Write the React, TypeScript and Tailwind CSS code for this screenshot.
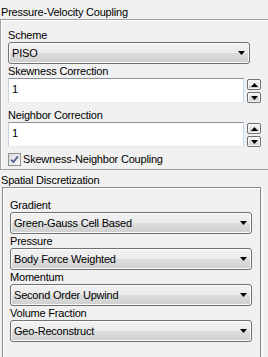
import React from 'react';

const BTN_BG =
  'bg-[linear-gradient(#f2f2f2_0%,#ebebeb_50%,#dddddd_50%,#cfcfcf_100%)]';

function Triangle({ up = false }: { up?: boolean }) {
  return (
    <svg width="7" height="4" viewBox="0 0 7 4" className="block">
      {up ? <path d="M3.5 0L7 4H0Z" fill="#000" /> : <path d="M0 0H7L3.5 4Z" fill="#000" />}
    </svg>
  );
}

function Label({ text }: { text: string }) {
  return <div className="h-[14px] leading-[14px] whitespace-nowrap">{text}</div>;
}

function Dropdown({ value }: { value: string }) {
  return (
    <div
      className={`flex h-[22px] w-[242px] items-center justify-between rounded-[3px] border border-[#707070] pl-[3px] pr-[4px] shadow-[inset_0_0_0_1px_#fafafa] ${BTN_BG}`}
    >
      <span className="leading-[14px] whitespace-nowrap">{value}</span>
      <Triangle />
    </div>
  );
}

function SpinButton({ up = false }: { up?: boolean }) {
  return (
    <div
      className={`flex h-[11px] w-[14px] items-center justify-center rounded-[2px] border border-[#707070] shadow-[inset_0_0_0_1px_#fafafa] ${BTN_BG}`}
    >
      <Triangle up={up} />
    </div>
  );
}

function SpinBox({ value }: { value: string }) {
  return (
    <div className="flex gap-[3px]">
      <div className="h-[25px] w-[236px] border border-t-[#8f9399] border-l-[#c9d2dc] border-r-[#c5daed] border-b-[#e3e9ef] bg-white px-[3px] pt-[3px] leading-[14px]">
        {value}
      </div>
      <div className="mt-[1px] flex flex-col gap-[2px]">
        <SpinButton up />
        <SpinButton />
      </div>
    </div>
  );
}

function Checkbox({ label }: { label: string }) {
  return (
    <div className="flex h-[14px] items-center gap-[2px]">
      <div className="flex h-[13px] w-[13px] items-center justify-center border border-[#8e8f8f] bg-[linear-gradient(135deg,#dcdcdc,#f8f8f8)] p-[1px]">
        <svg width="9" height="9" viewBox="0 0 9 9" className="block">
          <path d="M1 4.6L3.4 7L8 1.4" stroke="#4a5d8c" strokeWidth="1.7" fill="none" />
        </svg>
      </div>
      <span className="leading-[14px] whitespace-nowrap">{label}</span>
    </div>
  );
}

export default function App() {
  return (
    <div className="h-[357px] w-[268px] overflow-hidden bg-[#f0f0f0] font-['Liberation_Sans',Arial,sans-serif] text-[11px] tracking-[-0.2px] text-black">
      <div className="pl-[1px] pt-[6px] leading-[13px]">Pressure-Velocity Coupling</div>
      <div className="border-l border-t border-b border-[#a0a0a0] pb-[3px] pl-[7px] pt-[8px] shadow-[inset_1px_1px_0_#ffffff]">
        <Label text="Scheme" />
        <Dropdown value="PISO" />
        <Label text="Skewness Correction" />
        <SpinBox value="1" />
        <div className="mt-[5px]">
          <Label text="Neighbor Correction" />
        </div>
        <SpinBox value="1" />
        <div className="mt-[5px]">
          <Checkbox label="Skewness-Neighbor Coupling" />
        </div>
      </div>

      <div className="mt-[4px] pl-[1px] leading-[13px]">Spatial Discretization</div>
      <div className="ml-[2px] w-[261px] border-r border-white">
        <div className="w-[259px] border-l border-r border-t border-[#8a8a8a] pb-[40px] pl-[7px] pt-[10px] shadow-[inset_1px_1px_0_#ffffff]">
          <Label text="Gradient" />
          <Dropdown value="Green-Gauss Cell Based" />
          <Label text="Pressure" />
          <Dropdown value="Body Force Weighted" />
          <Label text="Momentum" />
          <Dropdown value="Second Order Upwind" />
          <Label text="Volume Fraction" />
          <Dropdown value="Geo-Reconstruct" />
        </div>
      </div>
    </div>
  );
}
